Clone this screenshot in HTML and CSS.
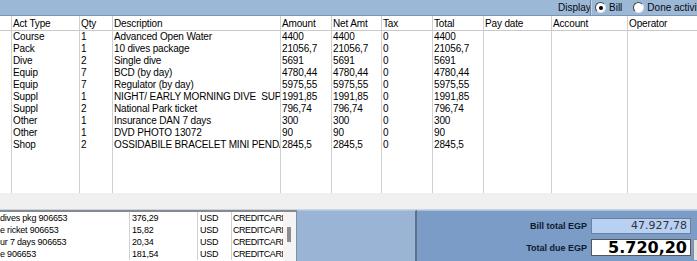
FILE: index.html
```html
<html>
	<head>
		<title>Bill</title>
		<link rel="stylesheet" href="styles.css">
	</head>
	<body>
	<div class="screen">
		<div class="topbar">
			<div class="display-group">
				<span class="display-label">Display</span>
				<span class="sep"></span>
				<span class="radio checked"><span class="circle"></span>Bill</span>
				<span class="radio"><span class="circle"></span>Done activities</span>
			</div>
		</div>

		<div class="grid">
			<div class="row head">
				<div class="cell"></div>
				<div class="cell">Act Type</div>
				<div class="cell">Qty</div>
				<div class="cell">Description</div>
				<div class="cell">Amount</div>
				<div class="cell">Net Amt</div>
				<div class="cell">Tax</div>
				<div class="cell">Total</div>
				<div class="cell">Pay date</div>
				<div class="cell">Account</div>
				<div class="cell">Operator</div>
			</div>
			<div class="row">
				<div class="cell"></div><div class="cell">Course</div><div class="cell">1</div><div class="cell">Advanced Open Water</div><div class="cell">4400</div><div class="cell">4400</div><div class="cell">0</div><div class="cell">4400</div><div class="cell"></div><div class="cell"></div><div class="cell"></div>
			</div>
			<div class="row">
				<div class="cell"></div><div class="cell">Pack</div><div class="cell">1</div><div class="cell">10 dives package</div><div class="cell">21056,7</div><div class="cell">21056,7</div><div class="cell">0</div><div class="cell">21056,7</div><div class="cell"></div><div class="cell"></div><div class="cell"></div>
			</div>
			<div class="row">
				<div class="cell"></div><div class="cell">Dive</div><div class="cell">2</div><div class="cell">Single dive</div><div class="cell">5691</div><div class="cell">5691</div><div class="cell">0</div><div class="cell">5691</div><div class="cell"></div><div class="cell"></div><div class="cell"></div>
			</div>
			<div class="row">
				<div class="cell"></div><div class="cell">Equip</div><div class="cell">7</div><div class="cell">BCD (by day)</div><div class="cell">4780,44</div><div class="cell">4780,44</div><div class="cell">0</div><div class="cell">4780,44</div><div class="cell"></div><div class="cell"></div><div class="cell"></div>
			</div>
			<div class="row">
				<div class="cell"></div><div class="cell">Equip</div><div class="cell">7</div><div class="cell">Regulator (by day)</div><div class="cell">5975,55</div><div class="cell">5975,55</div><div class="cell">0</div><div class="cell">5975,55</div><div class="cell"></div><div class="cell"></div><div class="cell"></div>
			</div>
			<div class="row">
				<div class="cell"></div><div class="cell">Suppl</div><div class="cell">1</div><div class="cell">NIGHT/ EARLY MORNING DIVE&nbsp; SUPPLEMENT</div><div class="cell">1991,85</div><div class="cell">1991,85</div><div class="cell">0</div><div class="cell">1991,85</div><div class="cell"></div><div class="cell"></div><div class="cell"></div>
			</div>
			<div class="row">
				<div class="cell"></div><div class="cell">Suppl</div><div class="cell">2</div><div class="cell">National Park ticket</div><div class="cell">796,74</div><div class="cell">796,74</div><div class="cell">0</div><div class="cell">796,74</div><div class="cell"></div><div class="cell"></div><div class="cell"></div>
			</div>
			<div class="row">
				<div class="cell"></div><div class="cell">Other</div><div class="cell">1</div><div class="cell">Insurance DAN 7 days</div><div class="cell">300</div><div class="cell">300</div><div class="cell">0</div><div class="cell">300</div><div class="cell"></div><div class="cell"></div><div class="cell"></div>
			</div>
			<div class="row">
				<div class="cell"></div><div class="cell">Other</div><div class="cell">1</div><div class="cell">DVD PHOTO 13072</div><div class="cell">90</div><div class="cell">90</div><div class="cell">0</div><div class="cell">90</div><div class="cell"></div><div class="cell"></div><div class="cell"></div>
			</div>
			<div class="row">
				<div class="cell"></div><div class="cell">Shop</div><div class="cell">2</div><div class="cell">OSSIDABILE BRACELET MINI PENDANT</div><div class="cell">2845,5</div><div class="cell">2845,5</div><div class="cell">0</div><div class="cell">2845,5</div><div class="cell"></div><div class="cell"></div><div class="cell"></div>
			</div>
			<div class="row filler">
				<div class="cell"></div><div class="cell"></div><div class="cell"></div><div class="cell"></div><div class="cell"></div><div class="cell"></div><div class="cell"></div><div class="cell"></div><div class="cell"></div><div class="cell"></div><div class="cell"></div>
			</div>
		</div>

		<div class="gap"></div>

		<div class="bottom">
			<div class="pay-grid">
				<div class="pay-rows">
					<div class="pay-row"><div class="pcell desc">dives pkg 906653</div><div class="pcell">376,29</div><div class="pcell">USD</div><div class="pcell card">CREDITCARD</div></div>
					<div class="pay-row"><div class="pcell desc">e ricket 906653</div><div class="pcell">15,82</div><div class="pcell">USD</div><div class="pcell card">CREDITCARD</div></div>
					<div class="pay-row"><div class="pcell desc">ur 7 days 906653</div><div class="pcell">20,34</div><div class="pcell">USD</div><div class="pcell card">CREDITCARD</div></div>
					<div class="pay-row"><div class="pcell desc">e 906653</div><div class="pcell">181,54</div><div class="pcell">USD</div><div class="pcell card">CREDITCARD</div></div>
				</div>
				<div class="vscroll"><span class="thumb"></span></div>
			</div>
			<div class="side-panel"></div>
			<div class="totals">
				<span class="t-label">Bill total EGP</span>
				<span class="t-box bill">47.927,78</span>
				<span></span>
				<span class="t-label">Total due EGP</span>
				<span class="t-box due">5.720,20</span>
				<span class="stub"></span>
			</div>
		</div>
	</div>
	</body>
</html>
```

FILE: styles.css
```css
html, body{
	margin: 0;
	padding: 0;
}
body{
	width: 697px;
	height: 261px;
	overflow: hidden;
	background: #f0f0f0;
	font-family: "Liberation Sans", Arial, sans-serif;
	color: #000;
}
.screen{
	display: flex;
	flex-direction: column;
	height: 261px;
}

/* top bar */
.topbar{
	height: 15px;
	background: #9cb8d7;
	border-bottom: 1px solid #7d95b2;
	display: flex;
	overflow: hidden;
}
.display-group{
	margin-left: 558px;
	display: flex;
	align-items: center;
	white-space: nowrap;
	font-size: 10px;
	color: #0a0a0a;
}
.display-label{
	width: 32px;
}
.sep{
	width: 1px;
	height: 15px;
	background: #6f87a5;
	border-right: 1px solid #c3d4e8;
	margin-right: 3px;
}
.radio{
	display: flex;
	align-items: center;
	margin-right: 11px;
}
.circle{
	width: 9px;
	height: 9px;
	border-radius: 50%;
	background: #fff;
	border: 1px solid #444;
	border-right-color: #dfe6ee;
	border-bottom-color: #dfe6ee;
	margin-right: 3px;
	display: flex;
	align-items: center;
	justify-content: center;
}
.radio.checked .circle::after{
	content: "";
	width: 4px;
	height: 4px;
	border-radius: 50%;
	background: #000;
}

/* main grid */
.grid{
	height: 177px;
	background: #fff;
	display: flex;
	flex-direction: column;
	font-size: 10px;
	letter-spacing: -0.15px;
}
.row{
	display: grid;
	grid-template-columns: 11px 68px 33px 168px 51px 50px 51px 51px 68px 76px 70px;
	height: 12px;
	line-height: 12px;
}
.row.head{
	height: 14px;
	line-height: 15px;
	border-bottom: 1px solid #c9c9c9;
}
.row.filler{
	flex: 1;
}
.cell{
	border-left: 1px solid #d0d0d0;
	padding-left: 1px;
	white-space: nowrap;
	overflow: hidden;
}
.cell:first-child{
	border-left: none;
}

.gap{
	height: 16px;
	background: #f0f0f0;
	border-bottom: 1px solid #c7d5e7;
}

/* bottom part */
.bottom{
	flex: 1;
	display: flex;
	background: #f0f0f0;
}
.pay-grid{
	width: 296px;
	display: flex;
	background: #fff;
	border-top: 2px solid #8a8a8a;
	border-right: 1px solid #7f8ea0;
}
.pay-rows{
	width: 283px;
	font-size: 9px;
	letter-spacing: -0.2px;
	color: #000;
}
.pay-row{
	display: grid;
	grid-template-columns: 129px 68px 34px 52px;
	height: 12px;
	line-height: 12px;
}
.pcell{
	border-left: 1px solid #d0d0d0;
	padding-left: 2px;
	white-space: nowrap;
	overflow: hidden;
}
.pcell.desc{
	border-left: none;
	padding-left: 0;
}
.pcell.card{
	padding-left: 1px;
	letter-spacing: -0.45px;
}
.vscroll{
	width: 13px;
	background: #f4f4f4;
	display: flex;
	flex-direction: column;
}
.thumb{
	margin: 15px 0 0 4px;
	width: 4px;
	height: 15px;
	background: #8c8c8c;
}
.side-panel{
	width: 118px;
	background: #99b4d4;
	border-right: 2px solid #5f7186;
	border-top: 1px solid #b3c6dd;
}
.totals{
	flex: 1;
	background: #7a9cc6;
	border-top: 1px solid #a9bfd9;
	display: grid;
	grid-template-columns: auto 100px 4px;
	grid-template-rows: 16px 17px;
	justify-content: end;
	align-content: start;
	column-gap: 2px;
	row-gap: 5px;
	padding-top: 7px;
}
.t-label{
	font-size: 9px;
	font-weight: bold;
	color: #0d1a2e;
	align-self: center;
	text-align: right;
	padding-right: 2px;
}
.t-box{
	box-sizing: border-box;
	border: 1px solid #6f7f94;
	text-align: right;
	padding-right: 3px;
	font-family: "DejaVu Sans", sans-serif;
	white-space: nowrap;
}
.t-box.bill{
	background: #b8d0f3;
	color: #333;
	font-size: 11px;
	line-height: 14px;
}
.t-box.due{
	background: #fff;
	color: #000;
	font-size: 16px;
	font-weight: bold;
	line-height: 15px;
	border-color: #555;
}
.stub{
	background: #e4e4e4;
	border-left: 1px solid #8d8d8d;
	border-top: 1px solid #8d8d8d;
	height: 20px;
}
```
